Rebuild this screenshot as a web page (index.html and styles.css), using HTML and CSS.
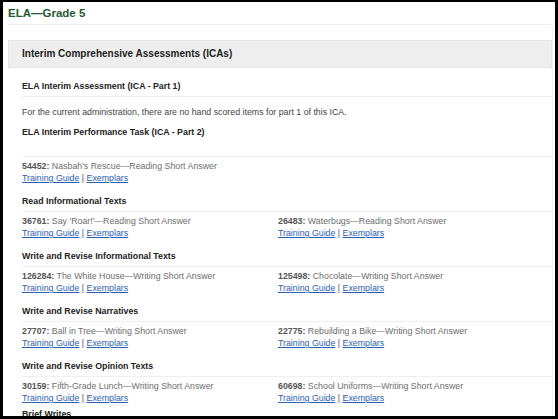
FILE: index.html
```html
<!DOCTYPE html>
<html>
<head>
<meta charset="utf-8">
<link rel="stylesheet" href="styles.css">
</head>
<body>
<div class="frame">
  <h2 class="page-title">ELA—Grade 5</h2>
  <div class="section">
    <div class="panel-head">Interim Comprehensive Assessments (ICAs)</div>
    <div class="content">
      <h4 class="sub">ELA Interim Assessment (ICA - Part 1)</h4>
      <p class="para">For the current administration, there are no hand scored items for part 1 of this ICA.</p>
      <h4 class="sub sub-plain">ELA Interim Performance Task (ICA - Part 2)</h4>
      <div class="group group-first">
        <div class="group-head group-head-empty"></div>
        <div class="items">
          <div class="item">
            <div class="item-title"><b>54452:</b> Nasbah's Rescue—Reading Short Answer</div>
            <div class="links"><a href="#">Training Guide</a> | <a href="#">Exemplars</a></div>
          </div>
        </div>
      </div>
      <div class="group">
        <div class="group-head">Read Informational Texts</div>
        <div class="items">
          <div class="item">
            <div class="item-title"><b>36761:</b> Say 'Roar!'—Reading Short Answer</div>
            <div class="links"><a href="#">Training Guide</a> | <a href="#">Exemplars</a></div>
          </div>
          <div class="item">
            <div class="item-title"><b>26483:</b> Waterbugs—Reading Short Answer</div>
            <div class="links"><a href="#">Training Guide</a> | <a href="#">Exemplars</a></div>
          </div>
        </div>
      </div>
      <div class="group">
        <div class="group-head">Write and Revise Informational Texts</div>
        <div class="items">
          <div class="item">
            <div class="item-title"><b>126284:</b> The White House—Writing Short Answer</div>
            <div class="links"><a href="#">Training Guide</a> | <a href="#">Exemplars</a></div>
          </div>
          <div class="item">
            <div class="item-title"><b>125498:</b> Chocolate—Writing Short Answer</div>
            <div class="links"><a href="#">Training Guide</a> | <a href="#">Exemplars</a></div>
          </div>
        </div>
      </div>
      <div class="group">
        <div class="group-head">Write and Revise Narratives</div>
        <div class="items">
          <div class="item">
            <div class="item-title"><b>27707:</b> Ball in Tree—Writing Short Answer</div>
            <div class="links"><a href="#">Training Guide</a> | <a href="#">Exemplars</a></div>
          </div>
          <div class="item">
            <div class="item-title"><b>22775:</b> Rebuilding a Bike—Writing Short Answer</div>
            <div class="links"><a href="#">Training Guide</a> | <a href="#">Exemplars</a></div>
          </div>
        </div>
      </div>
      <div class="group">
        <div class="group-head">Write and Revise Opinion Texts</div>
        <div class="items">
          <div class="item">
            <div class="item-title"><b>30159:</b> Fifth-Grade Lunch—Writing Short Answer</div>
            <div class="links"><a href="#">Training Guide</a> | <a href="#">Exemplars</a></div>
          </div>
          <div class="item">
            <div class="item-title"><b>60698:</b> School Uniforms—Writing Short Answer</div>
            <div class="links"><a href="#">Training Guide</a> | <a href="#">Exemplars</a></div>
          </div>
        </div>
      </div>
      <div class="group-head group-head-last">Brief Writes</div>
    </div>
  </div>
</div>
</body>
</html>
```
FILE: styles.css
```css
html, body {
  margin: 0;
  padding: 0;
  background: #fff;
}
body {
  font-family: "Liberation Sans", Arial, sans-serif;
}
.frame {
  width: 558px;
  height: 419px;
  box-sizing: border-box;
  border-style: solid;
  border-color: #000;
  border-width: 2px 3px 3px 3px;
  overflow: hidden;
  background: #fff;
}
.page-title {
  margin: 0;
  padding-left: 5px;
  height: 22px;
  line-height: 22px;
  font-size: 11.5px;
  font-weight: bold;
  color: #1f5b2e;
}
.section {
  margin: 0 2px 0 5px;
  border-top: 1px solid #efefef;
  border-right: 1px solid #f2f2f2;
  border-top-right-radius: 3px;
  padding-top: 15px;
}
.panel-head {
  height: 28px;
  line-height: 26px;
  box-sizing: border-box;
  background: #eeeeee;
  border: 1px solid #e6e6e6;
  padding-left: 13px;
  font-size: 10px;
  font-weight: bold;
  color: #222;
}
.content {
  padding-left: 14px;
}
.sub {
  margin: 8px 0 0 0;
  height: 20px;
  line-height: 20px;
  border-bottom: 1px solid #efefef;
  font-size: 8.8px;
  font-weight: bold;
  color: #222;
}
.sub-plain {
  margin-top: 3px;
  border-bottom: none;
}
.para {
  margin: 8px 0 0 0;
  line-height: 14px;
  font-size: 8.8px;
  color: #444;
}
.group {
  margin-top: 7px;
}
.group-first {
  margin-top: 0;
}
.group-head {
  height: 20px;
  line-height: 20px;
  border-bottom: 1px solid #efefef;
  font-size: 8.8px;
  font-weight: bold;
  color: #222;
}
.group-head-empty {
  height: 14px;
}
.group-head-last {
  border-bottom: none;
  margin-top: 4px;
  height: 12px;
  line-height: 12px;
}
.items {
  display: grid;
  grid-template-columns: 256px 1fr;
  padding-top: 3px;
}
.item-title {
  line-height: 12px;
  font-size: 8.8px;
  color: #6e6e6e;
  white-space: nowrap;
}
.item-title b {
  color: #555;
}
.links {
  line-height: 12px;
  font-size: 8.8px;
  color: #555;
  white-space: nowrap;
}
.links a {
  color: #2a60b4;
  text-decoration: underline;
}
```
